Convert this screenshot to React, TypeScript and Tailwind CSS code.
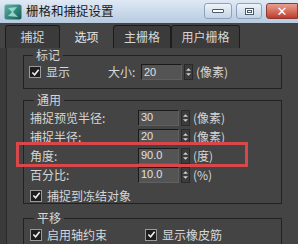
import React from "react";

const font = { fontFamily: '"Noto Sans CJK SC", "Noto Sans", sans-serif' };

const Check = () => (
  <span className="flex h-[12px] w-[12px] items-center justify-center border border-[#9a9a9a] bg-[#1e1e1e]">
    <svg viewBox="0 0 10 10" className="h-[9px] w-[9px]">
      <path d="M1.5 5 L4 7.5 L8.5 2" stroke="#f0f0f0" strokeWidth="1.8" fill="none" />
    </svg>
  </span>
);

const Spinner = () => (
  <span className="ml-[2px] flex h-[16px] w-[9px] flex-col items-center justify-center gap-[2px] border border-[#2a2a2a] bg-[#3c3c3c]">
    <svg viewBox="0 0 6 3" className="h-[3px] w-[5px]">
      <path d="M0 3 L3 0 L6 3Z" fill="#d0d0d0" />
    </svg>
    <svg viewBox="0 0 6 3" className="h-[3px] w-[5px]">
      <path d="M0 0 L3 3 L6 0Z" fill="#d0d0d0" />
    </svg>
  </span>
);

const NumField = ({ value, unit }: { value: string; unit: string }) => (
  <div className="flex items-center">
    <span
      className="flex h-[16px] w-[41px] items-center border-t border-l border-t-[#1a1a1a] border-l-[#1a1a1a] border-b border-r border-b-[#606060] border-r-[#606060] bg-[#545454] pl-[2px] text-[11px] text-[#e0e0e0]"
      style={{ fontFamily: '"Liberation Sans", Arial, sans-serif' }}
    >
      {value}
    </span>
    <Spinner />
    <span className="ml-[3px]">{unit}</span>
  </div>
);

const Group = ({ title, className, children }: { title: string; className?: string; children: React.ReactNode }) => (
  <fieldset className={`border border-[#222] ${className ?? ""}`}>
    <legend className="ml-[4px] px-[3px] leading-[14px]">{title}</legend>
    {children}
  </fieldset>
);

const Row = ({ label, value, unit }: { label: string; value: string; unit: string }) => (
  <div className="flex h-[19px] items-center">
    <span className="w-[108px]">{label}</span>
    <NumField value={value} unit={unit} />
  </div>
);

const tabs = ["捕捉", "选项", "主栅格", "用户栅格"];
const tabW = ["w-[55px]", "w-[53px]", "w-[58px]", "w-[69px]"];

export default function App() {
  return (
    <div className="relative h-[244px] w-[298px] overflow-hidden bg-[#444] text-[12px] text-[#d6d6d6]" style={font}>
      {/* title bar */}
      <div className="flex h-[23px] items-center bg-gradient-to-b from-[#dfe9f5] to-[#b7cbe0] pl-[4px]">
        <svg viewBox="0 0 18 16" className="h-[16px] w-[18px]">
          <defs>
            <linearGradient id="g" x1="0" y1="0" x2="1" y2="1">
              <stop offset="0" stopColor="#5fb3a8" />
              <stop offset="1" stopColor="#125a55" />
            </linearGradient>
          </defs>
          <rect x="0.5" y="0.5" width="17" height="15" rx="2" fill="url(#g)" />
          <path d="M4 4 L13 3 L9 8 L14 13 L4 12 L8 8Z" fill="#a7e0d6" opacity="0.85" />
        </svg>
        <span className="ml-[4px] text-[12.5px] text-[#1a1a1a]">栅格和捕捉设置</span>
        <div className="ml-auto flex h-[17px] items-start gap-[4px] self-start pt-[3px]">
          <span className="flex h-[16px] w-[28px] items-center justify-center rounded-[3px] border border-[#8da3bd] bg-gradient-to-b from-[#eef3f9] to-[#c4d3e4]">
            <span className="h-[4px] w-[12px] rounded-[1px] border border-[#4b5a6b] bg-white" />
          </span>
          <span className="flex h-[16px] w-[26px] items-center justify-center rounded-[3px] border border-[#8da3bd] bg-gradient-to-b from-[#eef3f9] to-[#c4d3e4]">
            <span className="h-[7px] w-[9px] border border-[#4b5a6b] bg-white p-[1px]">
              <span className="block h-full w-full border border-[#4b5a6b]" />
            </span>
          </span>
          <span className="flex h-[16px] w-[32px] items-center justify-center rounded-l-[3px] border border-[#8a3a32] bg-gradient-to-b from-[#e6a090] to-[#c0392b] text-[13px] font-bold leading-none text-white" style={{ fontFamily: '"DejaVu Sans", sans-serif' }}>
            ✕
          </span>
        </div>
      </div>

      {/* tabs */}
      <div className="flex h-[25px] items-end bg-[#444] pl-[5px]">
        {tabs.map((t, i) => (
          <div
            key={t}
            className={`flex h-[23px] items-center justify-center rounded-t-[3px] border border-b-0 ${tabW[i]} ${
              i === 1 ? "border-[#444] bg-[#444] text-[#e6e6e6]" : "border-[#1c1c1c] bg-[#3b3b3b]"
            }`}
          >
            {t}
          </div>
        ))}
      </div>

      {/* body */}
      <div className="flex h-[196px] border-l-[6px] border-l-[#3a3a3a]">
        <div className="flex-1 border-l border-[#2a2a2a] pl-[16px] pr-[16px]">
          <Group title="标记" className="h-[41px] pl-[5px]">
            <div className="flex h-[20px] items-center">
              <Check />
              <span className="ml-[5px] w-[62px]">显示</span>
              <span className="w-[33px]">大小:</span>
              <NumField value="20" unit="(像素)" />
            </div>
          </Group>

          <Group title="通用" className="mt-[4px] h-[111px] pl-[6px]">
            <div className="pt-[1px]">
              <Row label="捕捉预览半径:" value="30" unit="(像素)" />
              <Row label="捕捉半径:" value="20" unit="(像素)" />
              <Row label="角度:" value="90.0" unit="(度)" />
              <Row label="百分比:" value="10.0" unit="(%)" />
              <div className="mt-[2px] flex h-[19px] items-center">
                <Check />
                <span className="ml-[5px]">捕捉到冻结对象</span>
              </div>
            </div>
          </Group>

          <Group title="平移" className="mt-[7px] h-[40px] pl-[6px]">
            <div className="flex h-[19px] items-center">
              <Check />
              <span className="ml-[5px] w-[98px]">启用轴约束</span>
              <Check />
              <span className="ml-[5px]">显示橡皮筋</span>
            </div>
          </Group>
        </div>
      </div>

      {/* highlight box over 角度 row */}
      <div className="pointer-events-none absolute left-[16px] top-[142px] h-[25px] w-[232px] border-[3px] border-[#d8474a]" />
    </div>
  );
}
